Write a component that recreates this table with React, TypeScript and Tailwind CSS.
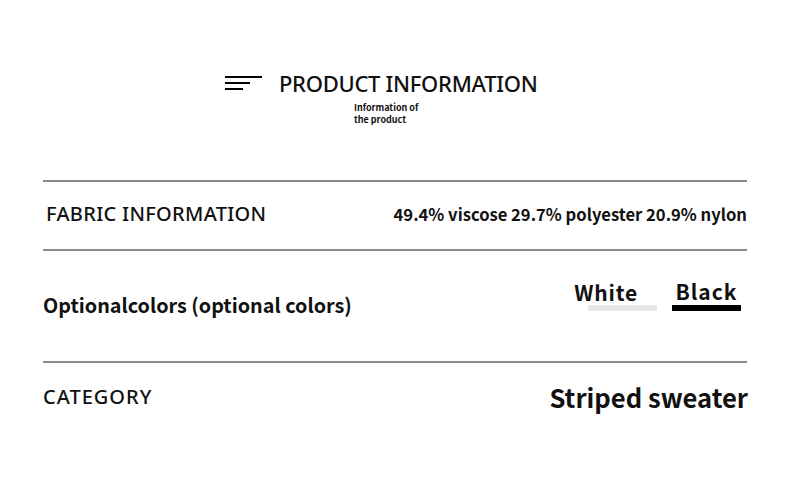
import React from "react";

export default function App() {
  const bold = { fontFamily: '"Noto Sans CJK SC", "Noto Sans", sans-serif' };
  const light = { fontFamily: '"Noto Sans", "Open Sans", sans-serif' };
  return (
    <div className="w-[790px] h-[488px] bg-white text-[#111] overflow-hidden">
      <div className="pt-[70px] flex items-center">
        <div className="ml-[225px] flex flex-col gap-[4px] w-[38px]">
          <div className="h-[2px] w-[37px] bg-black" />
          <div className="h-[2px] w-[25px] bg-black" />
          <div className="h-[2px] w-[18px] bg-black" />
        </div>
        <div className="ml-[16px] text-[22px] leading-[26px] font-medium tracking-[-0.3px]" style={light}>
          PRODUCT INFORMATION
        </div>
      </div>
      <div className="ml-[354px] mt-[6px] text-[9px] leading-[12px] font-bold" style={bold}>
        Information of
        <br />
        the product
      </div>
      <div className="mx-[43px] mt-[54px]">
        <div className="h-[2px] bg-[#8a8a8a]" />
        <div className="h-[67px] flex items-center justify-between">
          <div className="ml-[3px] -mt-[4px] text-[20px] font-medium tracking-[0.3px]" style={light}>FABRIC INFORMATION</div>
          <div className="-mt-[3px] text-[16.6px] font-bold" style={bold}>49.4% viscose 29.7% polyester 20.9% nylon</div>
        </div>
        <div className="h-[2px] bg-[#8a8a8a]" />
        <div className="h-[110px] flex items-center justify-between">
          <div className="-mt-[2px] text-[19.8px] font-bold" style={bold}>Optionalcolors (optional colors)</div>
          <div className="flex gap-[15px] mr-[6px] -mt-[22px]">
            <div className="flex flex-col items-end">
              <div className="text-[21px] leading-[26px] font-bold mr-[19px] tracking-[0.8px]" style={bold}>White</div>
              <div className="h-[6px] w-[69px] bg-[#e6e6e6]" />
            </div>
            <div className="flex flex-col items-center">
              <div className="text-[21px] leading-[26px] font-bold mb-[1px] -mt-[1px] tracking-[1px]" style={bold}>Black</div>
              <div className="h-[6px] w-[69px] bg-black" />
            </div>
          </div>
        </div>
        <div className="h-[2px] bg-[#8a8a8a]" />
        <div className="h-[68px] flex items-center justify-between">
          <div className="text-[20px] font-medium tracking-[1px]" style={light}>CATEGORY</div>
          <div className="-mr-[1px] text-[25.6px] font-bold" style={bold}>Striped sweater</div>
        </div>
      </div>
    </div>
  );
}
